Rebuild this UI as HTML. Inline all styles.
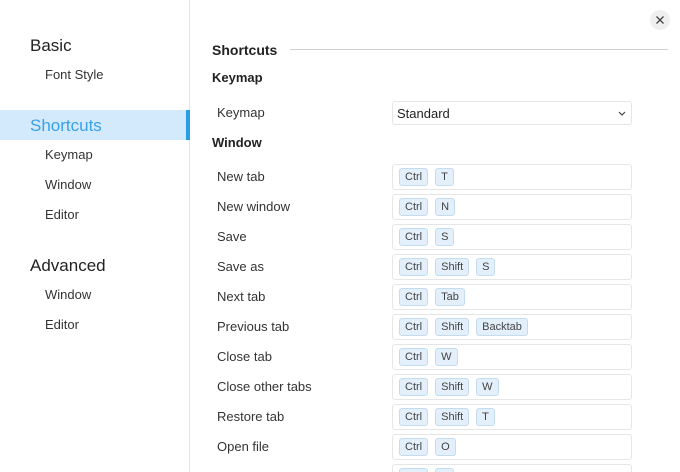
<!DOCTYPE html>
<html><head><style>
*{margin:0;padding:0;box-sizing:border-box}
html,body{width:680px;height:472px;overflow:hidden}
body{background:#fff;font-family:"Liberation Sans","DejaVu Sans",sans-serif;color:#333;position:relative}
.side{position:absolute;left:0;top:0;width:190px;height:472px;border-right:1px solid #e4e4e4}
.h{position:absolute;left:30px;font-size:17px;color:#222}
.i{position:absolute;left:45px;font-size:13px;color:#333}
.sel{position:absolute;left:0;top:110px;width:190px;height:30px;background:#d3eafd;border-right:4px solid #2a9ee8}
.t{position:absolute;font-size:13px}
.b{position:absolute;left:212px;font-size:13px;font-weight:bold;color:#222}
.box{position:absolute;left:392px;width:240px;height:26px;border:1px solid #e6e6e6;border-radius:3px;padding:3px 6px;display:flex;gap:7px}
.k{height:18px;border:1px solid #c5dcef;background:#e3effa;border-radius:3px;font-size:11px;padding:0 5px;line-height:16px;color:#444}
</style></head><body>
<div class="side">
<div class="h" style="top:36px">Basic</div>
<div class="i" style="top:67px">Font Style</div>
<div class="sel"></div>
<div class="h" style="top:116px;color:#3aa0e8">Shortcuts</div>
<div class="i" style="top:147px">Keymap</div>
<div class="i" style="top:177px">Window</div>
<div class="i" style="top:207px">Editor</div>
<div class="h" style="top:256px">Advanced</div>
<div class="i" style="top:287px">Window</div>
<div class="i" style="top:317px">Editor</div>
</div>
<svg style="position:absolute;left:650px;top:10px" width="20" height="20"><circle cx="10" cy="10" r="10" fill="#efefef"/><path d="M6.5 6.5L13.5 13.5M13.5 6.5L6.5 13.5" stroke="#444" stroke-width="1.3"/></svg>
<div class="b" style="top:42px;font-size:14px">Shortcuts</div>
<div style="position:absolute;left:290px;top:49px;width:378px;height:1px;background:#d0d0d0"></div>
<div class="b" style="top:70px">Keymap</div>
<div class="t" style="left:217px;top:105px">Keymap</div>
<div class="box" style="top:101px;height:24px;font-size:13px;padding:4px 4px;justify-content:space-between;color:#222"><span>Standard</span><svg width="10" height="14"><path d="M2 6L5 9L8 6" stroke="#444" fill="none" stroke-width="1.2"/></svg></div>
<div class="b" style="top:135px">Window</div>
<div class="t" style="left:217px;top:169px">New tab</div><div class="box" style="top:164px"><span class="k">Ctrl</span><span class="k">T</span></div>
<div class="t" style="left:217px;top:199px">New window</div><div class="box" style="top:194px"><span class="k">Ctrl</span><span class="k">N</span></div>
<div class="t" style="left:217px;top:229px">Save</div><div class="box" style="top:224px"><span class="k">Ctrl</span><span class="k">S</span></div>
<div class="t" style="left:217px;top:259px">Save as</div><div class="box" style="top:254px"><span class="k">Ctrl</span><span class="k">Shift</span><span class="k">S</span></div>
<div class="t" style="left:217px;top:289px">Next tab</div><div class="box" style="top:284px"><span class="k">Ctrl</span><span class="k">Tab</span></div>
<div class="t" style="left:217px;top:319px">Previous tab</div><div class="box" style="top:314px"><span class="k">Ctrl</span><span class="k">Shift</span><span class="k">Backtab</span></div>
<div class="t" style="left:217px;top:349px">Close tab</div><div class="box" style="top:344px"><span class="k">Ctrl</span><span class="k">W</span></div>
<div class="t" style="left:217px;top:379px">Close other tabs</div><div class="box" style="top:374px"><span class="k">Ctrl</span><span class="k">Shift</span><span class="k">W</span></div>
<div class="t" style="left:217px;top:409px">Restore tab</div><div class="box" style="top:404px"><span class="k">Ctrl</span><span class="k">Shift</span><span class="k">T</span></div>
<div class="t" style="left:217px;top:439px">Open file</div><div class="box" style="top:434px"><span class="k">Ctrl</span><span class="k">O</span></div>
<div class="box" style="top:464px"><span class="k">Ctrl</span><span class="k">P</span></div>
</body></html>
